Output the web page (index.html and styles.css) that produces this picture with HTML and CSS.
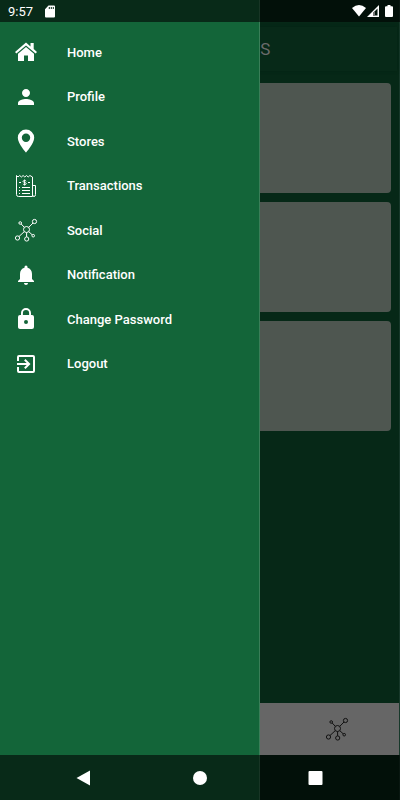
FILE: index.html
```html
<!DOCTYPE html>
<html lang="en">
<head>
    <meta charset="UTF-8">
    <meta name="viewport" content="width=device-width, initial-scale=1.0">
    <title>Home</title>
    <link rel="stylesheet" href="styles.css">
</head>
<body>
    <!-- shared icon, used in the menu and in the tab bar -->
    <svg class="sprite" aria-hidden="true">
        <symbol id="social" viewBox="0 0 24 24">
            <g fill="none" stroke="currentColor" stroke-width="1">
                <circle cx="12.5" cy="11.5" r="3"/>
                <circle cx="20.5" cy="3.5" r="2.1"/>
                <circle cx="6.2" cy="5" r="1.3"/>
                <circle cx="3.5" cy="20" r="2.1"/>
                <circle cx="12.7" cy="21" r="2.1"/>
                <circle cx="19.2" cy="17.7" r="1.3"/>
                <path d="M14.7 9.4L19 5M10.3 9.3L7.2 6M10.3 13.6L5 18.5M12.6 14.5v4.4M14.7 13.6l3.5 3.2"/>
            </g>
        </symbol>
    </svg>

    <div class="screen">
        <header class="toolbar">
            <h1 class="title">S</h1>
        </header>
        <main class="cards">
            <div class="card"></div>
            <div class="card"></div>
            <div class="card"></div>
        </main>
        <footer class="tabs">
            <button class="tab" type="button" aria-label="Social">
                <svg class="icon"><use href="#social"/></svg>
            </button>
        </footer>
    </div>

    <!-- side menu -->
    <nav class="drawer">
        <ul class="menu">
            <li class="item"><a class="link" href="#">
                <svg class="icon" viewBox="0 0 24 24" fill="currentColor"><path d="M12 2.5L1 12l1.400 1.600L12 5.400l9.600 8.200L23 12l-3.300-2.900V3h-3.200v3.400z"/><path d="M12 6.900l-8 6.800V21h6v-5.500h4V21h6v-7.300z"/></svg>
                <span>Home</span>
            </a></li>
            <li class="item"><a class="link" href="#">
                <svg class="icon" viewBox="0 0 24 24" fill="currentColor"><path d="M12 12c2.200 0 4-1.800 4-4s-1.800-4-4-4-4 1.800-4 4 1.800 4 4 4zm0 2c-2.700 0-8 1.300-8 4v2h16v-2c0-2.700-5.300-4-8-4z"/></svg>
                <span>Profile</span>
            </a></li>
            <li class="item"><a class="link" href="#">
                <svg class="icon" viewBox="0 0 24 24" fill="currentColor"><path fill-rule="evenodd" d="M12 .5a8.200 8.200 0 0 0-8.200 8.200C3.800 14.500 12 23.500 12 23.500s8.200-9 8.200-14.800A8.200 8.200 0 0 0 12 .5zm0 4a4.200 4.200 0 1 1 0 8.400 4.200 4.200 0 0 1 0-8.400z"/></svg>
                <span>Stores</span>
            </a></li>
            <li class="item"><a class="link" href="#">
                <svg class="icon" viewBox="0 0 24 24" fill="none" stroke="currentColor"><path d="M2.500 1.500l1.500 1.500 1.700-1.500L7.400 3l1.700-1.500L10.800 3l1.700-1.500L14.200 3l1.700-1.500L18.500 3V22.500H4.500q-2 0-2-2zM18.500 11.500h3v9q0 2-1.500 2t-1.500-2"/><path d="M5 8.500h2M14 8.500h2M5 13.500h1M8 13.500h8M5 16.500h1M8 16.500h8M5 19.500h1M8 19.500h8"/><path d="M12.200 7.200c-.3-1-3.200-1-3.200.2 0 1.400 3.300.8 3.300 2.200 0 1.300-3 1.300-3.400.2M10.600 5.500v6"/></svg>
                <span>Transactions</span>
            </a></li>
            <li class="item"><a class="link" href="#">
                <svg class="icon"><use href="#social"/></svg>
                <span>Social</span>
            </a></li>
            <li class="item"><a class="link" href="#">
                <svg class="icon" viewBox="0 0 24 24" fill="currentColor"><path d="M12 22c1.100 0 2-.9 2-2h-4c0 1.100.9 2 2 2zm6-6v-5c0-3.100-1.600-5.600-4.500-6.300V4a1.500 1.500 0 0 0-3 0v.7C7.600 5.400 6 7.900 6 11v5l-2 2v1h16v-1z"/></svg>
                <span>Notification</span>
            </a></li>
            <li class="item"><a class="link" href="#">
                <svg class="icon" viewBox="0 0 24 24" fill="currentColor"><path fill-rule="evenodd" d="M18 8h-1V6A5 5 0 0 0 7 6v2H6a2 2 0 0 0-2 2v10c0 1.100.9 2 2 2h12a2 2 0 0 0 2-2V10a2 2 0 0 0-2-2zm-6 9a2 2 0 1 1 0-4 2 2 0 0 1 0 4zm3.100-9H8.900V6a3.100 3.100 0 0 1 6.200 0z"/></svg>
                <span>Change Password</span>
            </a></li>
            <li class="item"><a class="link" href="#">
                <svg class="icon" viewBox="0 0 24 24" fill="currentColor"><path d="M10.100 15.600L11.500 17l5-5-5-5-1.400 1.400 2.600 2.600H3v2h9.700zM19 3H5a2 2 0 0 0-2 2v4h2V5h14v14H5v-4H3v4a2 2 0 0 0 2 2h14a2 2 0 0 0 2-2V5a2 2 0 0 0-2-2z"/></svg>
                <span>Logout</span>
            </a></li>
        </ul>
    </nav>

    <!-- system bars -->
    <div class="status-bar">
        <span class="clock">9:57</span>
        <svg class="sd" viewBox="0 0 10 13"><path fill="#fff" fill-rule="evenodd" d="M3.500.5H9q1 0 1 1v10q0 1-1 1H1q-1 0-1-1V4.200zM3.800 2v2h1V2zM5.800 2v2h1V2zM7.800 2v2h1V2z"/></svg>
        <svg class="signals" viewBox="0 0 42 14">
            <path fill="#fff" d="M0 4Q7-2 14 4L7 12.500z"/>
            <path fill="#fff" d="M27 1v12H15z"/>
            <path fill="#03160c" d="M25.500 4.500v7H21V9z"/>
            <path fill="#777" d="M21 9l2-2v4.500h-2z"/>
            <path fill="#fff" d="M35.500 1h3v1.200H40q1 0 1 1V12q0 1-1 1h-6q-1 0-1-1V3.200q0-1 1-1h1.500z"/>
        </svg>
    </div>
    <div class="nav-bar">
        <button class="nav-button" type="button" aria-label="Back">
            <svg class="nav-icon" viewBox="0 0 16 16"><path fill="#fff" d="M14 .5v15L.5 8z"/></svg>
        </button>
        <button class="nav-button" type="button" aria-label="Home">
            <svg class="nav-icon" viewBox="0 0 16 16"><circle fill="#fff" cx="8" cy="8" r="7"/></svg>
        </button>
        <button class="nav-button" type="button" aria-label="Recent apps">
            <svg class="nav-icon" viewBox="0 0 16 16"><rect fill="#fff" x=".5" y="1" width="14" height="14" rx="1"/></svg>
        </button>
    </div>
</body>
</html>
```

FILE: styles.css
```css
* {
    box-sizing: border-box;
}
body {
    margin: 0;
    position: relative;
    min-height: 100vh;
    background: #062817;
    color: #fff;
    font-family: Roboto, sans-serif;
}
button {
    border: none;
    background: none;
    padding: 0;
    color: inherit;
    cursor: pointer;
}
.sprite {
    position: absolute;
    width: 0;
    height: 0;
}
.icon {
    width: 24px;
    height: 24px;
    flex: none;
}

/* page under the menu */
.screen {
    display: flex;
    flex-direction: column;
    min-height: 100vh;
    padding: 27px 0 45px;
    border-right: 1px solid #17382a;
}
.toolbar {
    display: flex;
    align-items: center;
    height: 44px;
    margin-right: 2px;
    padding-left: calc(65% + 1px);
    background: #072918;
    box-shadow: 0 0 3px #052314;
}
.title {
    margin: 0;
    font-size: 17px;
    font-weight: 400;
    color: #6b6b6b;
}
.cards {
    display: flex;
    flex-direction: column;
    flex: 1;
    gap: 9px;
    padding: 12px 8px 12px 9px;
}
.card {
    height: 110px;
    border-radius: 4px;
    background: #4e5650;
}
.tabs {
    display: flex;
    justify-content: flex-end;
    height: 52px;
    background: #666;
    color: #111;
}
.tab {
    width: 31%;
    display: flex;
    align-items: center;
    justify-content: center;
}

/* side menu */
.drawer {
    position: absolute;
    top: 0;
    bottom: 0;
    left: 0;
    width: 65%;
    padding-top: 30px;
    background: #136539;
    border-right: 1px solid #3a7e58;
}
.menu {
    display: flex;
    flex-direction: column;
    height: 356px;
    margin: 0;
    padding: 0;
    list-style: none;
}
.item {
    flex: 1;
    display: flex;
}
.link {
    display: flex;
    align-items: center;
    gap: 29px;
    width: 100%;
    padding-left: 14px;
    color: #fff;
    font-size: 13px;
    font-weight: 500;
    text-decoration: none;
}

/* system bars */
.status-bar {
    position: absolute;
    top: 0;
    left: 0;
    right: 0;
    display: flex;
    align-items: center;
    height: 22px;
    padding: 0 6px 0 8px;
    background: rgba(0, 0, 0, 0.58);
}
.clock {
    font-size: 13px;
}
.sd {
    width: 10px;
    height: 13px;
    margin-left: 12px;
}
.signals {
    width: 42px;
    height: 14px;
    margin-left: auto;
}
.nav-bar {
    position: absolute;
    left: 0;
    right: 0;
    bottom: 0;
    display: flex;
    justify-content: center;
    gap: 25%;
    height: 45px;
    background: rgba(0, 0, 0, 0.58);
}
.nav-button {
    display: flex;
    align-items: center;
}
.nav-icon {
    width: 16px;
    height: 16px;
}
```
